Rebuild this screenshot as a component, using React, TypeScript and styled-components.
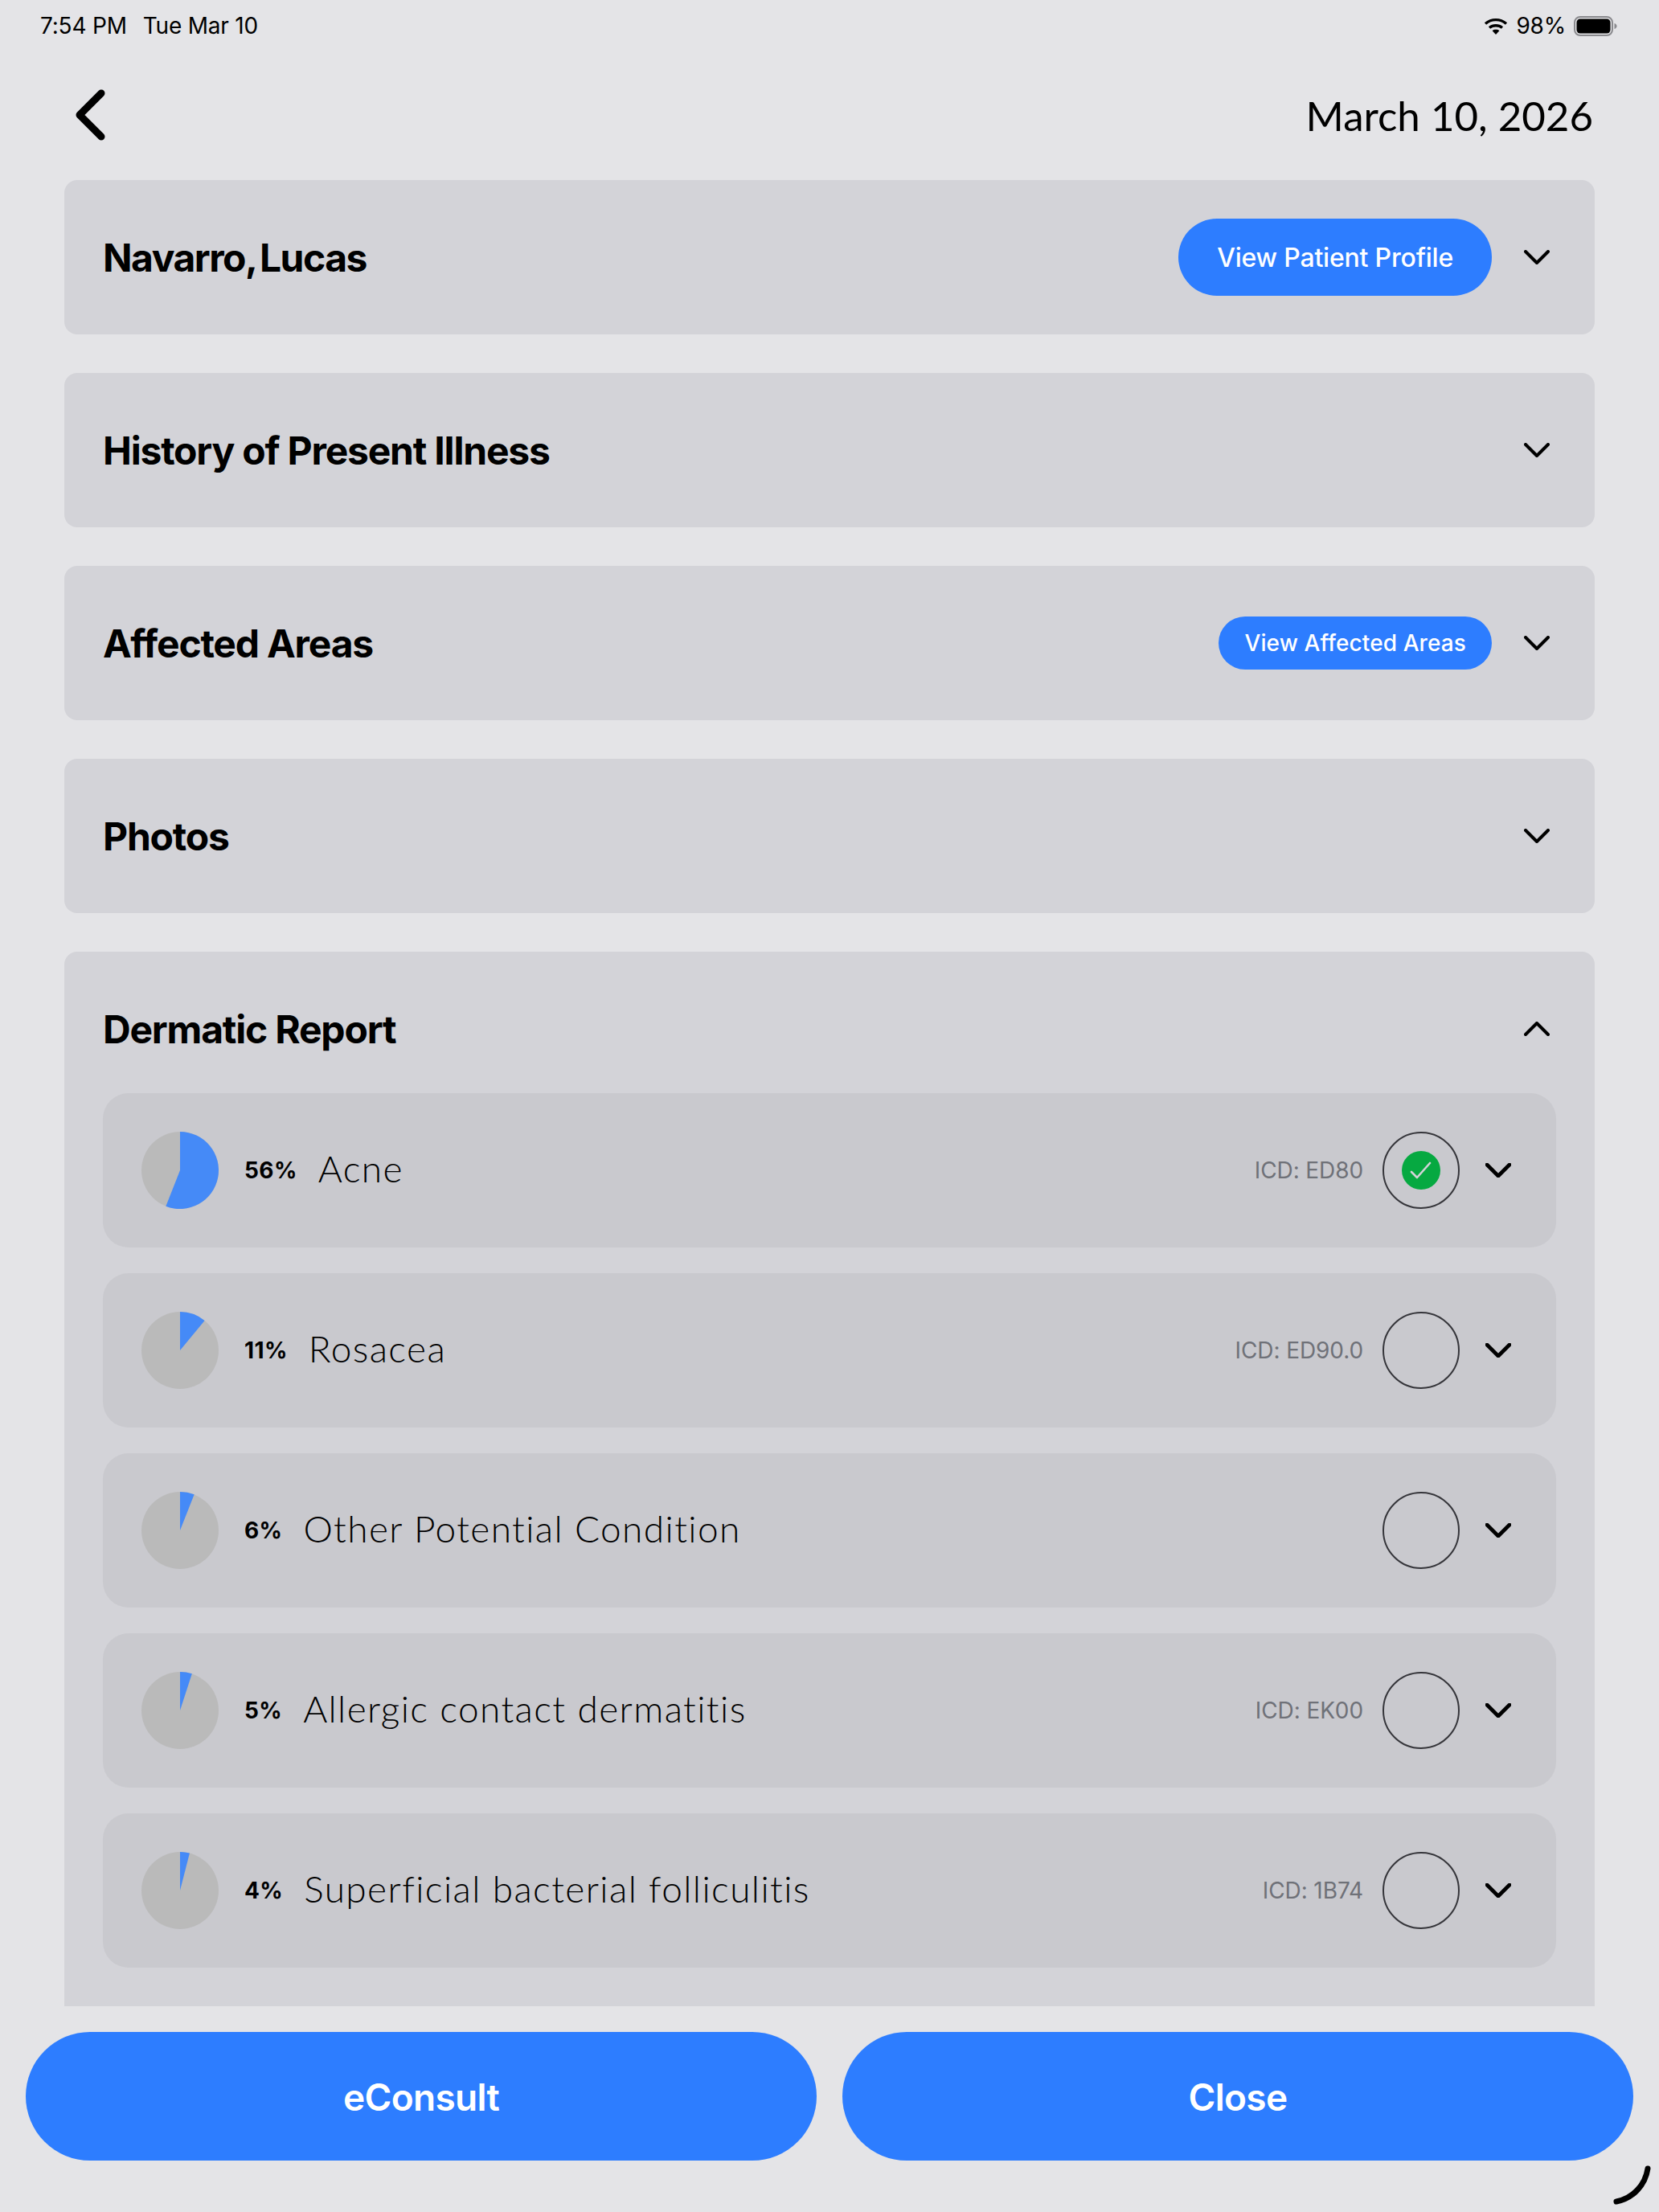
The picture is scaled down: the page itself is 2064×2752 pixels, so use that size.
import styled, { createGlobalStyle } from 'styled-components';

const SANS = '"Inter", "Liberation Sans", sans-serif';
const GEO = '"Lato", "Noto Sans", sans-serif';

const GlobalStyle = createGlobalStyle`
    html, body {
        margin : 0;
        padding : 0;
        background : #e4e4e7;
    }
    * {
        box-sizing : border-box;
    }
`;

const Page = styled.div`
    position : relative;
    display : flex;
    flex-direction : column;
    width : 2064px;
    height : 2752px;
    overflow : hidden;
    background : #e4e4e7;
    color : #000;
    font-family : ${SANS};
`;

const StatusBar = styled.div`
    display : flex;
    align-items : center;
    justify-content : space-between;
    height : 64px;
    padding : 0 52px 0 50px;
    font-size : 28px;
    letter-spacing : -0.2px;
`;

const StatusGroup = styled.div<{ $gap : number }>`
    display : flex;
    align-items : center;
    gap : ${p => p.$gap}px;
`;

const TopBar = styled.div`
    display : flex;
    align-items : center;
    justify-content : space-between;
    height : 160px;
    padding : 0 82px 2px 92px;
`;

const DateText = styled.div`
    font-family : ${GEO};
    font-size : 51px;
    font-weight : 400;
`;

const Scroll = styled.div`
    display : flex;
    flex-direction : column;
    flex : 1;
    gap : 48px;
    min-height : 0;
    margin : 0 80px;
    overflow : hidden;
`;

const Card = styled.section`
    flex : none;
    background : #d3d3d8;
    border-radius : 16px;
`;

const CardHead = styled.div`
    display : flex;
    align-items : center;
    height : 192px;
    padding : 0 56px 0 48px;
`;

const Title = styled.h2<{ $tight? : boolean }>`
    flex : 1;
    margin : 0;
    font-size : 48px;
    font-weight : 700;
    letter-spacing : ${p => (p.$tight ? -1.5 : -1.2)}px;
    word-spacing : ${p => (p.$tight ? -5 : 0)}px;
`;

const Pill = styled.div<{ $large? : boolean }>`
    display : flex;
    align-items : center;
    height : ${p => (p.$large ? 96 : 66)}px;
    margin-right : 40px;
    padding : 0 ${p => (p.$large ? 48 : 32)}px;
    border-radius : 48px;
    background : #2d7dff;
    color : #fff;
    font-size : ${p => (p.$large ? 32 : 28)}px;
    font-weight : 500;
    letter-spacing : ${p => (p.$large ? -0.2 : 0.1)}px;
`;

const Rows = styled.div`
    display : flex;
    flex-direction : column;
    gap : 32px;
    margin-top : -16px;
    padding : 0 48px 96px;
`;

const Row = styled.div`
    display : flex;
    align-items : center;
    height : 192px;
    padding : 0 56px 0 48px;
    border-radius : 32px;
    background : #c9c9ce;
`;

const Percent = styled.span`
    margin-left : 32px;
    font-size : 28px;
    font-weight : 700;
    letter-spacing : 0.4px;
`;

const Name = styled.span`
    flex : 1;
    margin-left : 26px;
    padding-bottom : 6px;
    font-family : ${GEO};
    font-size : 46px;
    font-weight : 300;
    letter-spacing : 1.4px;
`;

const Code = styled.span`
    margin-right : 24px;
    color : #6f7178;
    font-size : 28px;
    font-weight : 400;
    letter-spacing : -0.1px;
`;

const Tick = styled.div`
    display : flex;
    align-items : center;
    justify-content : center;
    flex : none;
    width : 96px;
    height : 96px;
    margin-right : 32px;
    border : 2px solid #35353a;
    border-radius : 50%;
`;

const TickFill = styled.div`
    display : flex;
    align-items : center;
    justify-content : center;
    width : 48px;
    height : 48px;
    border-radius : 50%;
    background : #06a941;
`;

const Footer = styled.div`
    display : grid;
    grid-template-columns : 1fr 1fr;
    gap : 32px;
    padding : 32px 32px 64px;
`;

const BigButton = styled.button`
    height : 160px;
    padding : 2px 0 0;
    border : 0;
    border-radius : 80px;
    background : #2d7dff;
    color : #fff;
    font-family : ${SANS};
    font-size : 46px;
    font-weight : 600;
    letter-spacing : -0.7px;
`;

const CornerMark = styled.svg`
    position : absolute;
    right : 8px;
    bottom : 8px;
`;

function Chevron({ up = false, weight = 4 } : { up? : boolean; weight? : number }) {
    return (
        <svg width="32" height="18" viewBox="0 0 32 18" fill="none">
            <path
                d={up ? 'M2 16L16 2L30 16' : 'M2 2L16 16L30 2'}
                stroke="#000"
                strokeWidth={weight}
                strokeLinecap="round"
                strokeLinejoin="round"
            />
        </svg>
    );
}

function Pie({ percent } : { percent : number }) {
    const angle = (percent / 100) * Math.PI * 2;
    const x = 48 + 48 * Math.sin(angle);
    const y = 48 - 48 * Math.cos(angle);
    const large = percent > 50 ? 1 : 0;
    return (
        <svg width="96" height="96" viewBox="0 0 96 96" style={{ flex : 'none' }}>
            <circle cx="48" cy="48" r="48" fill="#bababa" />
            <path d={`M48 48L48 0A48 48 0 ${large} 1 ${x} ${y}Z`} fill="#458af7" />
        </svg>
    );
}

function Wifi() {
    return (
        <svg width="30" height="21" viewBox="0 0 30 21" fill="none">
            <path d="M2 7.5C9.5 1 20.5 1 28 7.5" stroke="#000" strokeWidth="3.4" strokeLinecap="butt" />
            <path d="M7 12.5C11.5 8.8 18.5 8.8 23 12.5" stroke="#000" strokeWidth="3.4" />
            <path d="M15 21L10.6 16.2C13 14.4 17 14.4 19.4 16.2Z" fill="#000" />
        </svg>
    );
}

function Battery() {
    return (
        <svg width="54" height="25" viewBox="0 0 54 25" fill="none">
            <rect x="1" y="1" width="47" height="23" rx="7" stroke="#8a8a8e" strokeWidth="2" />
            <rect x="3.5" y="3.5" width="42" height="18" rx="4.5" fill="#000" />
            <path d="M50.5 9C52.5 9.6 53.5 11 53.5 12.5C53.5 14 52.5 15.4 50.5 16Z" fill="#8a8a8e" />
        </svg>
    );
}

const conditions = [
    { percent : 56, name : 'Acne', code : 'ICD: ED80', checked : true },
    { percent : 11, name : 'Rosacea', code : 'ICD: ED90.0', checked : false },
    { percent : 6, name : 'Other Potential Condition', code : '', checked : false },
    { percent : 5, name : 'Allergic contact dermatitis', code : 'ICD: EK00', checked : false },
    { percent : 4, name : 'Superficial bacterial folliculitis', code : 'ICD: 1B74', checked : false },
];

function App() {
    return (
        <Page>
            <GlobalStyle />
            <StatusBar>
                <StatusGroup $gap={20}>
                    <span>7:54 PM</span>
                    <span>Tue Mar 10</span>
                </StatusGroup>
                <StatusGroup $gap={10}>
                    <Wifi />
                    <span>98%</span>
                    <Battery />
                </StatusGroup>
            </StatusBar>
            <TopBar>
                <svg width="40" height="64" viewBox="0 0 40 64" fill="none">
                    <path d="M34 5L7 32L34 59" stroke="#000" strokeWidth="9" strokeLinecap="round" strokeLinejoin="round" />
                </svg>
                <DateText>March 10, 2026</DateText>
            </TopBar>
            <Scroll>
                <Card>
                    <CardHead>
                        <Title $tight>Navarro, Lucas</Title>
                        <Pill $large>View Patient Profile</Pill>
                        <Chevron />
                    </CardHead>
                </Card>
                <Card>
                    <CardHead>
                        <Title>History of Present Illness</Title>
                        <Chevron />
                    </CardHead>
                </Card>
                <Card>
                    <CardHead>
                        <Title>Affected Areas</Title>
                        <Pill>View Affected Areas</Pill>
                        <Chevron />
                    </CardHead>
                </Card>
                <Card>
                    <CardHead>
                        <Title>Photos</Title>
                        <Chevron />
                    </CardHead>
                </Card>
                <Card>
                    <CardHead>
                        <Title>Dermatic Report</Title>
                        <Chevron up />
                    </CardHead>
                    <Rows>
                        {conditions.map(item => (
                            <Row key={item.name}>
                                <Pie percent={item.percent} />
                                <Percent>{item.percent}%</Percent>
                                <Name>{item.name}</Name>
                                {item.code && <Code>{item.code}</Code>}
                                <Tick>
                                    {item.checked && (
                                        <TickFill>
                                            <svg width="28" height="24" viewBox="0 0 28 24" fill="none">
                                                <path d="M2 14L9 21L25 3" stroke="#d3d3d8" strokeWidth="2.6" strokeLinecap="round" strokeLinejoin="round" />
                                            </svg>
                                        </TickFill>
                                    )}
                                </Tick>
                                <Chevron weight={4.6} />
                            </Row>
                        ))}
                    </Rows>
                </Card>
            </Scroll>
            <Footer>
                <BigButton>eConsult</BigButton>
                <BigButton>Close</BigButton>
            </Footer>
            <CornerMark width="50" height="50" viewBox="0 0 50 50" fill="none">
                <path d="M44 4C41 24 26 41 5 45" stroke="#000" strokeWidth="7" strokeLinecap="round" />
            </CornerMark>
        </Page>
    );
}

export default App;
